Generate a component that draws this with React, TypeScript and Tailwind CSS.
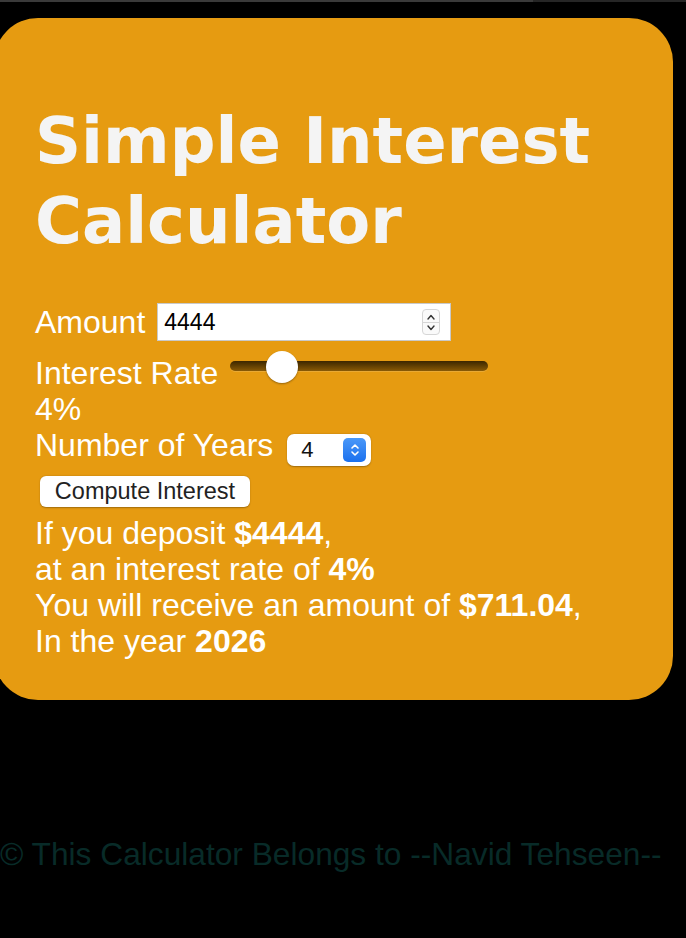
import { useState } from "react";

function NumberSpinner() {
  return (
    <div className="flex h-[26px] w-[18px] flex-col items-center justify-center rounded-[4px] border border-[#d6d6d6] bg-[#fafafa]">
      <svg width="10" height="8" viewBox="0 0 10 8" className="mb-[1px]">
        <path d="M2 6 L5 2.5 L8 6" fill="none" stroke="#333" strokeWidth="1.4" strokeLinecap="round" strokeLinejoin="round" />
      </svg>
      <div className="h-px w-full bg-[#d6d6d6]" />
      <svg width="10" height="8" viewBox="0 0 10 8" className="mt-[1px]">
        <path d="M2 2 L5 5.5 L8 2" fill="none" stroke="#333" strokeWidth="1.4" strokeLinecap="round" strokeLinejoin="round" />
      </svg>
    </div>
  );
}

function RateSlider({ value }: { value: number }) {
  // thumb sits at ~20% of the track in the reference
  const pct = (value / 20) * 100;
  return (
    <div className="relative h-[32px] w-[258px]">
      <div className="absolute left-0 right-0 top-[10px] h-[10px] rounded-full bg-gradient-to-b from-[#3d2700] to-[#8a5a06] shadow-[0_1px_0_rgba(255,255,255,0.15)]" />
      <div
        className="absolute top-0 h-[32px] w-[32px] -translate-x-1/2 rounded-full bg-white shadow-[0_1px_2px_rgba(0,0,0,0.35)]"
        style={{ left: `${pct}%` }}
      />
    </div>
  );
}

export default function App() {
  const [amount] = useState("4444");
  const [rate] = useState(4);
  const [years] = useState("4");

  return (
    <div className="min-h-[938px] w-[686px] overflow-hidden bg-black font-['Liberation_Sans',Arial,sans-serif]">
      <div className="flex h-[2px]">
        <div className="w-[533px] bg-[#3a3a3a]" />
        <div className="flex-1 bg-[#262626]" />
      </div>

      <div className="ml-[-6px] mt-[16px] w-[679px] rounded-[44px] bg-[#e69b11] pb-[41px] pl-[41px] pt-[83px] text-[32px] leading-[36px] text-white">
        <h1 className="font-['DejaVu_Sans',Verdana,sans-serif] text-[64px] font-bold leading-[80px] text-[#f4f4f4]">
          Simple Interest Calculator
        </h1>

        <div className="mt-[42px] flex items-center gap-[12px]">
          <span>Amount</span>
          <div className="flex h-[38px] w-[294px] items-center justify-between border border-[#c9c9c9] bg-white pl-[6px] pr-[10px]">
            <span className="text-[23px] text-black">{amount}</span>
            <NumberSpinner />
          </div>
        </div>

        <div className="mt-[14px] flex items-start gap-[12px]">
          <span>Interest Rate</span>
          <div className="-mt-[4px]">
            <RateSlider value={rate} />
          </div>
        </div>
        <div>{rate}%</div>

        <div className="flex h-[36px] items-center gap-[14px]">
          <span>Number of Years</span>
          <div className="mt-[10px] flex h-[32px] w-[84px] items-center justify-between rounded-[7px] bg-white pl-[14px] pr-[5px] shadow-[0_0.5px_1.5px_rgba(0,0,0,0.3)]">
            <span className="text-[22px] text-[#111]">{years}</span>
            <div className="flex h-[24px] w-[23px] items-center justify-center rounded-[5px] bg-gradient-to-b from-[#4a98f8] to-[#1a70ee]">
              <svg width="10" height="14" viewBox="0 0 10 14">
                <path d="M2 5 L5 2 L8 5 M2 9 L5 12 L8 9" fill="none" stroke="white" strokeWidth="1.6" strokeLinecap="round" strokeLinejoin="round" />
              </svg>
            </div>
          </div>
        </div>

        <button className="ml-[5px] mt-[13px] flex h-[31px] w-[210px] items-center justify-center rounded-[6px] bg-white text-[23.5px] leading-none text-[#222] shadow-[0_0.5px_1.5px_rgba(0,0,0,0.3)]">
          Compute Interest
        </button>

        <div className="mt-[8px]">
          <p>
            If you deposit <b>${amount}</b>,
          </p>
          <p>
            at an interest rate of <b>{rate}%</b>
          </p>
          <p>
            You will receive an amount of <b>$711.04</b>,
          </p>
          <p>
            In the year <b>2026</b>
          </p>
        </div>
      </div>

      <p className="mt-[136px] text-[31.7px] leading-[36px] text-[#082b28]">
        © This Calculator Belongs to --Navid Tehseen--
      </p>
    </div>
  );
}
